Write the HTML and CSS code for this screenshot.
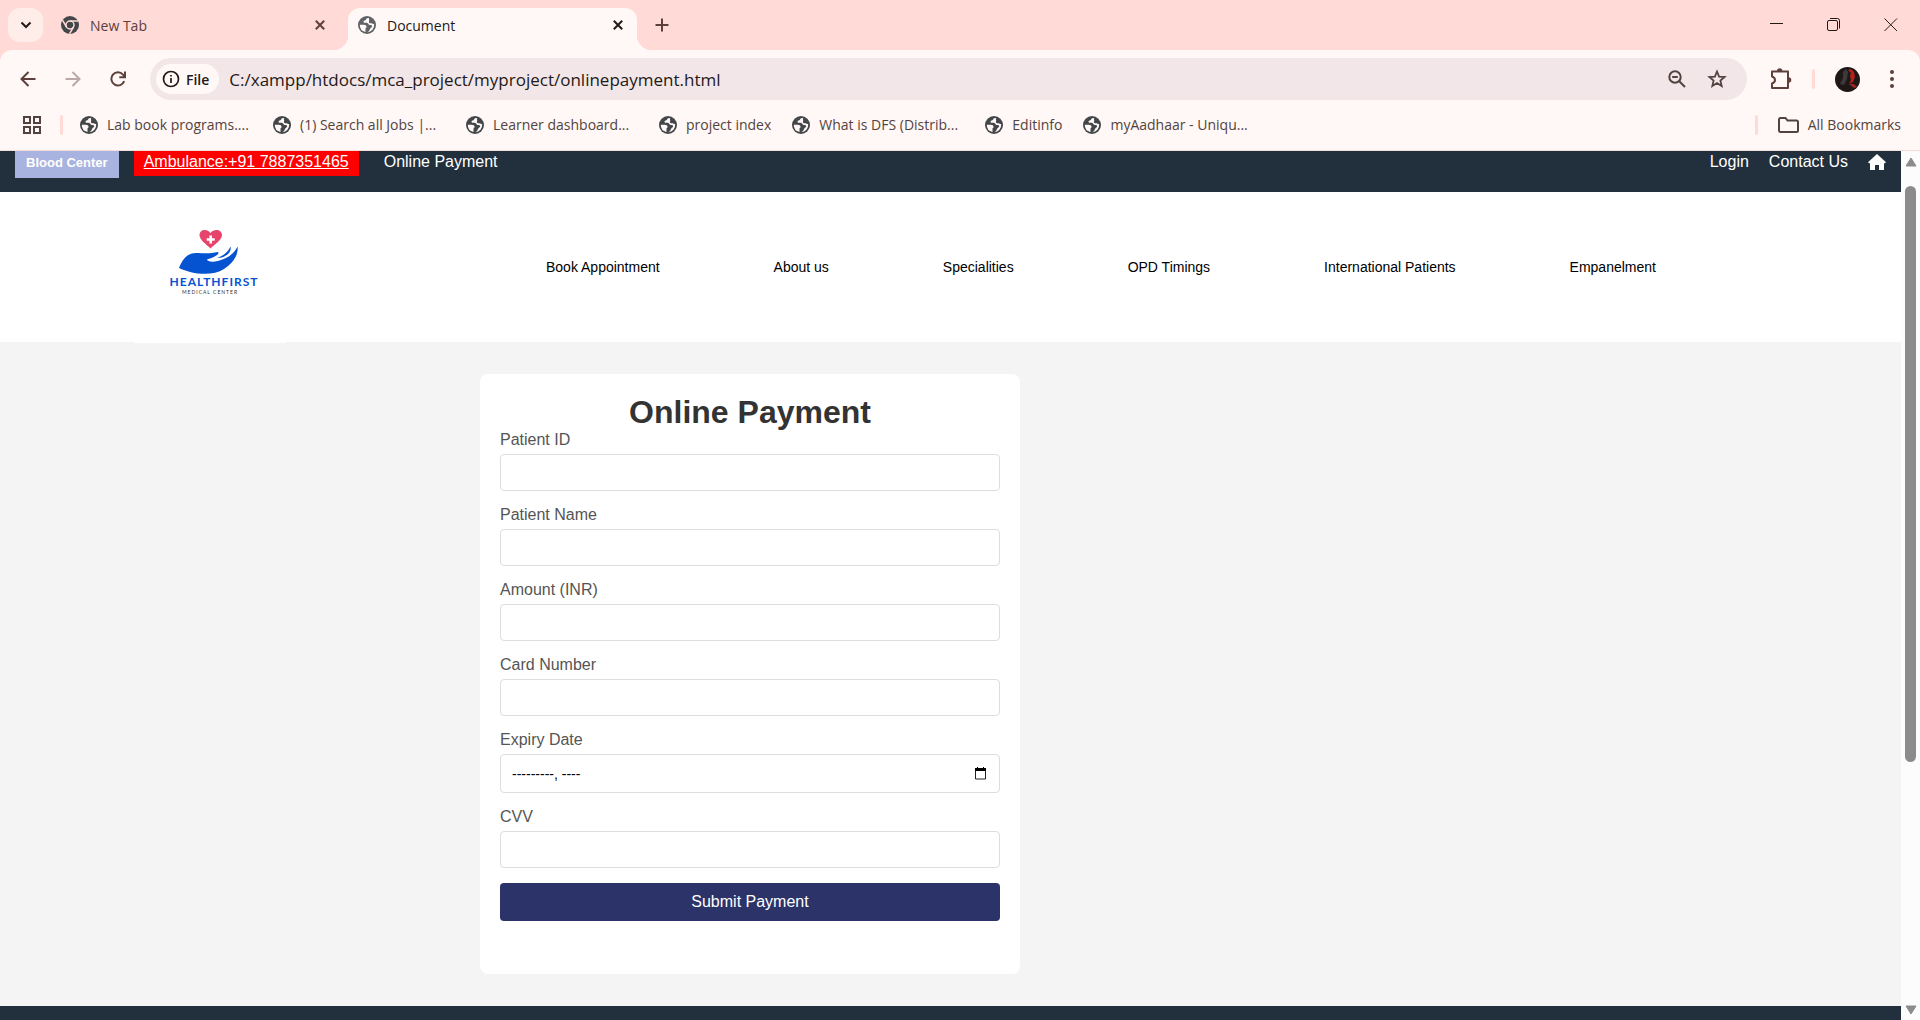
FILE: index.html
```html
<!DOCTYPE html>
<html lang="en">
<head>
<meta charset="utf-8">
<title>Document</title>
<link rel="stylesheet" href="styles.css">
</head>
<body>
<svg class="sprite" aria-hidden="true">
  <symbol id="globe" viewBox="0 0 18 18">
    <circle cx="9" cy="9" r="9" fill="currentColor"/>
    <path d="M9.800 1.900C8 2.300 8.400 3.600 7.400 4.200C6 4.600 5.200 5.200 5.600 6.200C6 7.200 7.800 6.700 9.300 6.900C10.600 7.100 10.500 8.800 11.600 9.100C13 9.300 14.200 9 14.200 10.200C14 11.700 12.300 11.600 12 12.900C11.700 14.400 10.400 15.700 9.300 16.200A7.300 7.300 0 0 0 16.200 8.300L13.500 7.300C11.800 7.600 10.400 6.600 11 5.400C11.800 4.200 10.300 3.300 11.300 2.200Z" fill="#fff8f6"/>
    <path d="M1.800 8.800H5.800C7.400 8.900 8.600 9.600 8.600 10.900C8.600 11.800 7.500 11.700 7.500 12.600V16A7.200 7.200 0 0 1 1.800 8.800Z" fill="#fff8f6"/>
  </symbol>
  <symbol id="cross" viewBox="0 0 10 10"><path d="M.8.8 9.200 9.200M9.200.8.8 9.200" stroke="currentColor" stroke-width="2"/></symbol>
</svg>
<div class="browser">
  <header class="chrome">
    <div class="tabstrip">
      <button class="tab-search" aria-label="Search tabs"><svg width="12" height="8" viewBox="0 0 12 8"><path d="M1.500 1.500 6 6 10.500 1.500" fill="none" stroke="currentColor" stroke-width="2"/></svg></button>
      <div class="tab">
        <svg class="favicon" viewBox="0 0 18 18"><circle cx="9" cy="9" r="9" fill="#43474a"/><circle cx="9" cy="9" r="4" fill="none" stroke="#ffdad6" stroke-width="1.500"/><path d="M9 5H17M5.500 11 1.500 4.200M12.500 11 8.500 17.800" stroke="#ffdad6" stroke-width="1.500"/></svg>
        <span class="tab-title">New Tab</span>
        <button class="icon-button" aria-label="Close New Tab"><svg width="10" height="10"><use href="#cross"/></svg></button>
      </div>
      <div class="tab tab-active">
        <svg class="favicon"><use href="#globe"/></svg>
        <span class="tab-title">Document</span>
        <button class="icon-button" aria-label="Close Document"><svg width="10" height="10"><use href="#cross"/></svg></button>
      </div>
      <button class="icon-button new-tab" aria-label="New tab"><svg width="14" height="14" viewBox="0 0 14 14"><path d="M7 .5V13.500M.5 7H13.500" stroke="currentColor" stroke-width="2"/></svg></button>
      <div class="window-controls">
        <button class="icon-button" aria-label="Minimize"><svg width="14" height="14" viewBox="0 0 14 14"><path d="M0 5.500H13" stroke="currentColor"/></svg></button>
        <button class="icon-button" aria-label="Restore"><svg width="14" height="14" viewBox="0 0 14 14" fill="none" stroke="currentColor"><rect x=".5" y="2.500" width="10" height="10" rx="1.500"/><path d="M3 .5H10.500Q12.500.5 12.500 2.500V10.500"/></svg></button>
        <button class="icon-button" aria-label="Close window"><svg width="14" height="14" viewBox="0 0 14 14"><path d="M.5.5 13 13M13 .5.5 13" stroke="currentColor"/></svg></button>
      </div>
    </div>
    <div class="toolbar">
      <button class="icon-button" aria-label="Back"><svg width="16" height="16" viewBox="0 0 16 16" fill="none" stroke="currentColor" stroke-width="2"><path d="M15.500 8H2M8.500 1 1.500 8 8.500 15"/></svg></button>
      <button class="icon-button muted" aria-label="Forward"><svg width="16" height="16" viewBox="0 0 16 16" fill="none" stroke="currentColor" stroke-width="2"><path d="M.5 8H14M7.500 1 14.500 8 7.500 15"/></svg></button>
      <button class="icon-button" aria-label="Reload"><svg width="16" height="16" viewBox="0 0 16 16" fill="none" stroke="currentColor" stroke-width="2"><path d="M14.200 10.200A6.600 6.600 0 1 1 13 3.600L14.500 5.500M15 .5V6.200H9.300"/></svg></button>
      <div class="omnibox">
        <button class="chip"><svg width="18" height="18" viewBox="0 0 18 18"><circle cx="9" cy="9" r="7.500" fill="none" stroke="currentColor" stroke-width="1.700"/><path d="M9 8V13M9 5V6.600" stroke="currentColor" stroke-width="1.700"/></svg>File</button>
        <input class="url" type="text" aria-label="Address" value="C:/xampp/htdocs/mca_project/myproject/onlinepayment.html">
        <button class="icon-button" aria-label="Zoom"><svg width="18" height="18" viewBox="0 0 18 18" fill="none" stroke="currentColor" stroke-width="2"><circle cx="7" cy="7" r="5.700"/><path d="M11 11 17 17M4.200 7H9.800"/></svg></button>
        <button class="icon-button" aria-label="Bookmark this page"><svg width="20" height="20" viewBox="0 0 20 20" fill="none" stroke="currentColor" stroke-width="1.800"><path d="M10 2.500 12.100 7.600 17.600 8 13.400 11.600 14.700 17 10 14.100 5.300 17 6.600 11.600 2.400 8 7.900 7.600Z"/></svg></button>
      </div>
      <div class="toolbar-end">
        <button class="icon-button" aria-label="Extensions"><svg width="22" height="22" viewBox="0 0 22 22"><path d="M2 3.500H18V20H2V15.500Q5 14.500 5 12T2 8.500Z" fill="none" stroke="currentColor" stroke-width="2" stroke-linejoin="round"/><path d="M7 3A2.700 2.700 0 0 1 12.400 3ZM18.500 9.200A2.800 2.800 0 0 1 18.500 14.800Z" fill="currentColor"/></svg></button>
        <span class="divider"></span>
        <button class="icon-button avatar" aria-label="Profile"><svg width="25" height="25" viewBox="0 0 25 25"><circle cx="12.500" cy="12.500" r="12.500" fill="#1d1817"/><path d="M8 5 11 2 13 5 12 12 9 18 5 17 8 11Z" fill="#3e3938"/><path d="M13 3 16 2 19 5 20 10 18 15 14 17 16 13 15 9 16 6Z" fill="#b3201c"/><path d="M14 17 19 17 22 20 19 21Z" fill="#a32420"/></svg></button>
        <button class="icon-button" aria-label="Menu"><svg width="4" height="18" viewBox="0 0 4 18" fill="currentColor"><circle cx="2" cy="2" r="2"/><circle cx="2" cy="9" r="2"/><circle cx="2" cy="16" r="2"/></svg></button>
      </div>
    </div>
    <nav class="bookmarks" aria-label="Bookmarks">
      <button class="icon-button apps" aria-label="Apps"><svg width="18" height="18" viewBox="0 0 18 18" fill="none" stroke="currentColor" stroke-width="2"><path d="M1 1H7V7H1ZM11 1H17V7H11ZM1 11H7V17H1ZM11 11H17V17H11Z"/></svg></button>
      <span class="divider"></span>
      <a class="bookmark wide" href="#"><svg class="favicon"><use href="#globe"/></svg>Lab book programs....</a>
      <a class="bookmark wide" href="#"><svg class="favicon"><use href="#globe"/></svg>(1) Search all Jobs |...</a>
      <a class="bookmark wide" href="#"><svg class="favicon"><use href="#globe"/></svg>Learner dashboard...</a>
      <a class="bookmark" href="#"><svg class="favicon"><use href="#globe"/></svg>project index</a>
      <a class="bookmark wide" href="#"><svg class="favicon"><use href="#globe"/></svg>What is DFS (Distrib...</a>
      <a class="bookmark" href="#"><svg class="favicon"><use href="#globe"/></svg>Editinfo</a>
      <a class="bookmark wide" href="#"><svg class="favicon"><use href="#globe"/></svg>myAadhaar - Uniqu...</a>
      <div class="all-bookmarks">
        <span class="divider"></span>
        <a class="bookmark" href="#"><svg width="21" height="16" viewBox="0 0 21 16" fill="none" stroke="currentColor" stroke-width="2"><path d="M1 2.500Q1 1 2.500 1H7.500L9.500 3.500H18.500Q20 3.500 20 5V13.500Q20 15 18.500 15H2.500Q1 15 1 13.500Z"/></svg>All Bookmarks</a>
      </div>
    </nav>
  </header>
  <div class="viewport">
    <div class="page">
      <div class="topbar">
        <button class="blood">Blood Center</button>
        <a class="ambulance" href="#">Ambulance:+91 7887351465</a>
        <a class="toplink" href="#">Online Payment</a>
        <div class="topbar-end">
          <a class="toplink" href="#">Login</a>
          <a class="toplink" href="#">Contact Us</a>
          <a class="toplink home" href="#" aria-label="Home"><svg width="18" height="16" viewBox="0 0 18 16"><path d="M9 0 18 8.200 17 9.200H16V16H11V11H7V16H2V9.200H1L0 8.200Z" fill="#fff"/></svg></a>
        </div>
      </div>
      <div class="mainnav">
        <a class="logo" href="#" aria-label="HealthFirst Medical Center">
          <svg width="152" height="151" viewBox="0 0 152 151">
            <path d="M76.500 56.500C72 52 65.500 48 65.500 43C65.500 37.500 73 36 76.500 41C80 36 88 37.500 88 43C88 48 81 52 76.500 56.500Z" fill="#e6446b"/>
            <path d="M76.700 43.500V51.500M72.700 47.500H80.700" stroke="#fff" stroke-width="2.600"/>
            <path d="M45 76C49 66 54 61 62 61C70 61 75 62 84 60C86 62 81 65 73 67.500C74 71 84 70 92 66C98 63 102 58 103.500 54.500C105 63 98 72 90 77C78 85 57 82 45 76Z" fill="#0653d2"/>
            <path d="M83 66C89 64 94 60 96.500 54.500C98 60 92 66 83 66Z" fill="#0653d2"/>
            <text class="logo-name" x="80" y="94" text-anchor="middle">HEALTHFIRST</text>
            <text class="logo-sub" x="76" y="102" text-anchor="middle">MEDICAL CENTER</text>
          </svg>
        </a>
        <nav class="menu" aria-label="Main">
          <a href="#">Book Appointment</a>
          <a href="#">About us</a>
          <a href="#">Specialities</a>
          <a href="#">OPD Timings</a>
          <a href="#">International Patients</a>
          <a href="#">Empanelment</a>
        </nav>
      </div>
      <main class="content">
        <form class="card">
          <h1>Online Payment</h1>
          <label for="pid">Patient ID</label>
          <input id="pid" class="field" type="text">
          <label for="pname">Patient Name</label>
          <input id="pname" class="field" type="text">
          <label for="amount">Amount (INR)</label>
          <input id="amount" class="field" type="text">
          <label for="card">Card Number</label>
          <input id="card" class="field" type="text">
          <label for="expiry">Expiry Date</label>
          <div class="field month">
            <input id="expiry" type="text" value="---------, ----">
            <button type="button" class="icon-button" aria-label="Show month picker"><svg width="11" height="13" viewBox="0 0 11 13"><path d="M.5 2H10.500V12H.5Z" fill="none" stroke="#222"/><path d="M0 1H2V0H3V1H8V0H9V1H11V4H0Z" fill="#000"/></svg></button>
          </div>
          <label for="cvv">CVV</label>
          <input id="cvv" class="field" type="text">
          <button type="button" class="submit">Submit Payment</button>
        </form>
      </main>
      <footer class="footer"></footer>
    </div>
    <div class="scrollbar" aria-hidden="true">
      <svg width="12" height="10" viewBox="0 0 12 10"><path d="M6 1 11 9H1Z" fill="#8b8b8b" stroke="#8b8b8b" stroke-linejoin="round"/></svg>
      <div class="track"><div class="thumb"></div></div>
      <svg width="12" height="10" viewBox="0 0 12 10"><path d="M6 9 11 1H1Z" fill="#8b8b8b" stroke="#8b8b8b" stroke-linejoin="round"/></svg>
    </div>
  </div>
</div>
</body>
</html>
```
FILE: styles.css
```css
* { box-sizing: border-box; }
body { margin: 0; font-family: "Liberation Sans", Arial, sans-serif; font-size: 16px; }
a { color: inherit; text-decoration: none; }
button { font: inherit; color: inherit; border: 0; padding: 0; background: none; }
svg { display: block; flex: none; }
.sprite { position: absolute; width: 0; height: 0; }
.browser { display: flex; flex-direction: column; height: 100vh; overflow: hidden; }

/* browser window */
.chrome { flex: none; background: #ffdad6; color: #534340; font-family: "Open Sans", "Noto Sans", sans-serif; font-size: 14px; border-bottom: 1px solid #f6dcd8; }
.icon-button { display: flex; align-items: center; justify-content: center; flex: none; }
.favicon { width: 18px; height: 18px; color: #43474a; }
.divider { width: 3px; height: 20px; border-radius: 2px; background: #ffdad6; flex: none; }

.tabstrip { display: flex; align-items: center; height: 50px; padding: 0 22px 0 8px; }
.tab-search { display: flex; align-items: center; justify-content: center; width: 35px; height: 34px; border-radius: 12px; background: #ffedea; color: #231917; }
.tab { display: flex; align-items: center; width: 305px; padding: 0 23px 0 18px; color: #5d403c; }
.tab-title { flex: 1; margin-left: 11px; }
.tab-active { position: relative; align-self: flex-end; width: 289px; height: 42px; padding: 0 14px 8px 10px; border-radius: 12px 12px 0 0; background: #fff8f6; color: #231917; }
.tab-active .favicon { color: #5f6368; }
.tab-active::before, .tab-active::after { content: ""; position: absolute; bottom: 0; width: 14px; height: 14px; }
.tab-active::before { right: 100%; background: radial-gradient(circle at 0 0, transparent 14px, #fff8f6 14px); }
.tab-active::after { left: 100%; background: radial-gradient(circle at 100% 0, transparent 14px, #fff8f6 14px); }
.new-tab { margin-left: 18px; color: #5d403c; }
.window-controls { display: flex; gap: 43px; margin-left: auto; color: #231917; }

.toolbar { display: flex; align-items: center; height: 58px; padding: 0 26px 0 20px; background: #fff8f6; border-radius: 12px 12px 0 0; color: #5d403c; }
.toolbar > .icon-button { margin-right: 29px; }
.toolbar > .muted { color: #b9a8a5; }
.omnibox { display: flex; align-items: center; flex: 1; height: 42px; margin-left: -5px; padding: 0 20px 0 6px; border-radius: 21px; background: #f2e6e8; color: #534340; gap: 21px; }
.chip { display: flex; align-items: center; gap: 6px; height: 30px; padding: 0 10px 0 6px; border-radius: 15px; background: #fff8f6; color: #231917; font-weight: 600; }
.url { flex: 1; min-width: 0; height: 30px; margin-left: -11px; padding: 0; border: 0; background: none; color: #231917; font: 17px "Open Sans", "Noto Sans", sans-serif; }
.toolbar-end { display: flex; align-items: center; gap: 20px; margin-left: 23px; }
.toolbar-end .avatar { margin-right: 10px; }

.bookmarks { display: flex; align-items: center; height: 42px; padding: 0 19px 9px 23px; background: #fff8f6; color: #534340; }
.apps { margin-right: 19px; }
.bookmarks > .divider { margin-right: 17px; }
.bookmark { display: flex; align-items: center; gap: 9px; padding-right: 21px; white-space: nowrap; }
.wide { width: 193px; padding-right: 0; }
.all-bookmarks { display: flex; align-items: center; gap: 20px; margin-left: auto; }
.all-bookmarks .bookmark { padding: 0; }

/* page */
.viewport { display: flex; flex: 1; min-height: 0; }
.page { flex: 1; min-width: 0; display: flex; flex-direction: column; background: #f4f4f4; overflow: hidden; }
.topbar { display: flex; align-items: flex-start; flex: none; height: 41px; padding: 0 15px; background: #22303d; color: #fff; }
.blood { height: 27px; padding: 0 11px 5px; background: #a9b3df; font-size: 13px; font-weight: bold; }
.ambulance { margin: 0 25px 0 15px; padding: 2px 10px 5px; background: #f00; line-height: 18px; text-decoration: underline; }
.toplink { padding-top: 2px; line-height: 18px; }
.topbar-end { display: flex; gap: 20px; margin-left: auto; }
.home { padding-top: 3px; }
.mainnav { display: flex; align-items: center; flex: none; height: 150px; padding: 0 245px 0 134px; background: #fff; }
.logo { align-self: flex-start; background: #fff; }
.logo-name { font: bold 12px Lato, sans-serif; letter-spacing: 1px; fill: #0653d2; }
.logo-sub { font: 5px Lato, sans-serif; letter-spacing: 1px; fill: #333; }
.menu { display: flex; flex: 1; justify-content: space-between; margin-left: 260px; font-size: 14px; color: #000; }
.content { flex: none; padding: 32px 480px; }
.card { width: 540px; height: 600px; padding: 20px; border-radius: 8px; background: #fff; }
.card h1 { margin: 0; font-size: 32px; line-height: 37px; text-align: center; color: #333; }
.card label { display: block; margin-bottom: 5px; line-height: 18px; color: #555; }
.field { display: block; width: 100%; height: 37px; margin-bottom: 15px; padding: 10px; border: 1px solid #ddd; border-radius: 4px; font: 13px "Liberation Sans", Arial, sans-serif; background: #fff; }
.month { display: flex; align-items: center; height: 39px; padding: 0 13px 0 11px; }
.month input { flex: 1; min-width: 0; padding: 0; border: 0; background: none; font: inherit; font-size: 14px; color: #000; }
.submit { display: block; width: 100%; height: 38px; border-radius: 4px; background: #2c3369; color: #fff; }
.footer { flex: 1; background: #22303d; }
.scrollbar { display: flex; flex-direction: column; align-items: center; width: 19px; padding: 6px 0 5px; background: #fcfcfc; }
.track { flex: 1; width: 11px; margin: 19px 0; }
.thumb { height: 72%; border-radius: 6px; background: #8b8b8b; }
```
